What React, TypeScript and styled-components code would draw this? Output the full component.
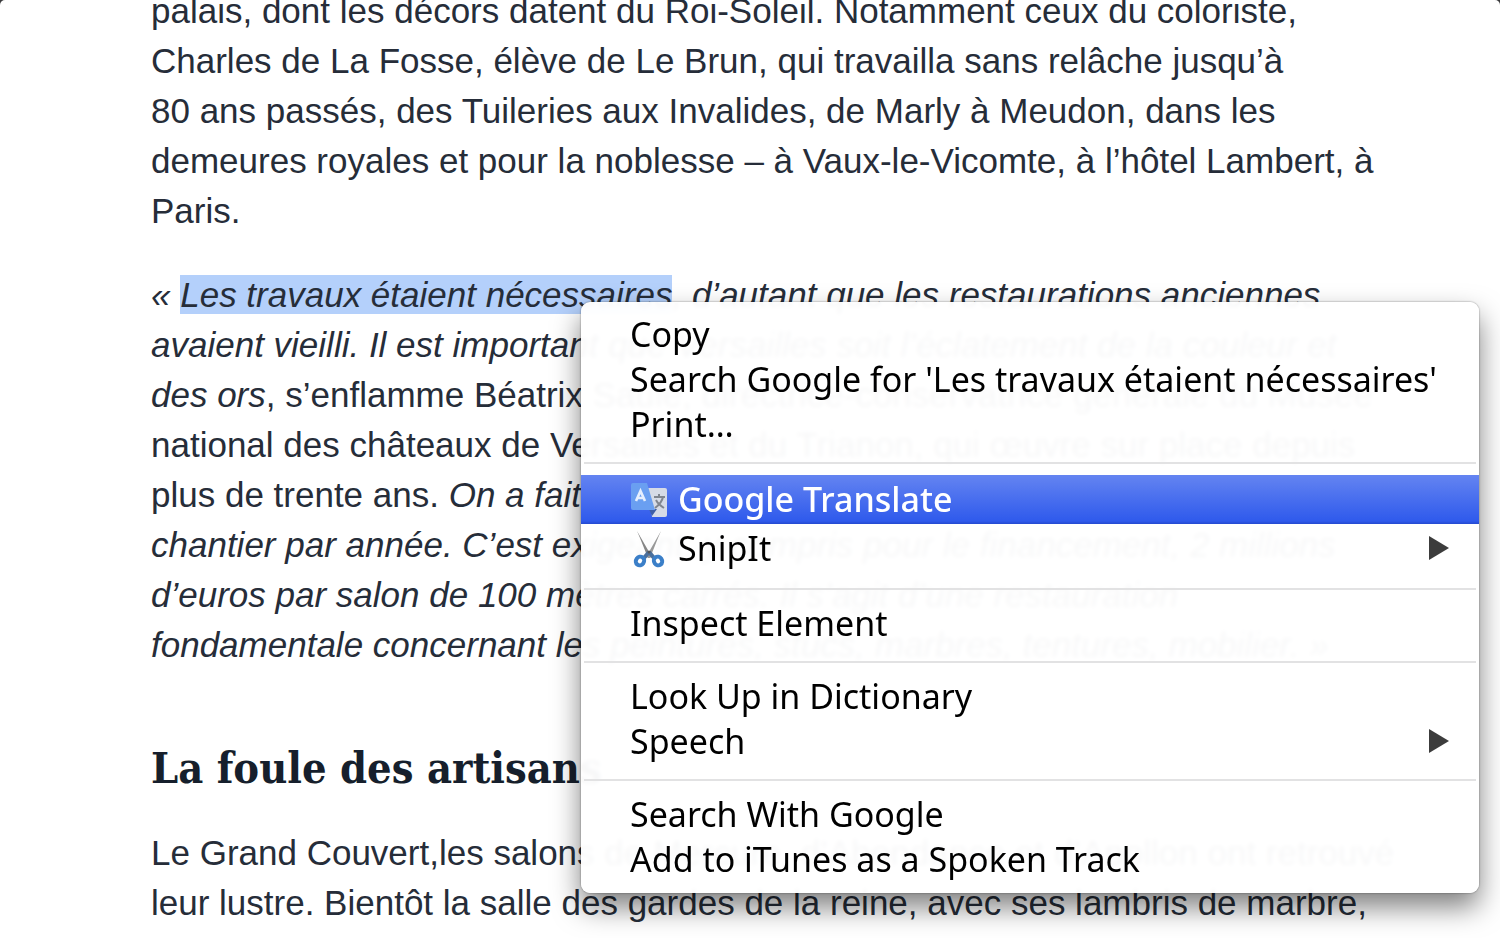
import React from 'react';
import styled, { createGlobalStyle, css } from 'styled-components';

const GlobalStyle = createGlobalStyle`
  *, *::before, *::after { box-sizing: border-box; }
  body { margin: 0; background: #3a3a3c; }
`;

const Page = styled.main`
  position: relative;
  height: 100vh;
  overflow: hidden;
  padding-left: 151px;
  background: #fff;
  border-radius: 5px 5px 0 0;
  color: #262d39;
  font-family: 'Liberation Sans', Arial, sans-serif;
  font-size: 35px;
  line-height: 50px;
  white-space: nowrap;
`;

const Article = styled.article`
  display: flex;
  flex-direction: column;
  margin-top: -14px;
`;

const Paragraph = styled.p`
  margin: 0 0 34px;
`;

const Heading = styled.h2`
  margin: 34px 0 30px;
  color: #161f2c;
  font: 700 43px/60px 'DejaVu Serif Condensed', 'DejaVu Serif', serif;
  font-stretch: condensed;
`;

const Selection = styled.mark`
  background: #b4d0fb;
  color: inherit;
`;

const Menu = styled.div`
  position: absolute;
  top: 302px;
  left: 581px;
  width: 898px;
  padding: 10px 0 11px;
  display: flex;
  flex-direction: column;
  border-radius: 9px;
  background: rgba(255, 255, 255, 0.965);
  backdrop-filter: blur(2px);
  box-shadow: 0 0 2px rgba(0, 0, 0, 0.5), 0 14px 28px rgba(0, 0, 0, 0.5);
`;

const Item = styled.button<{ $tall?: boolean; $active?: boolean }>`
  display: flex;
  align-items: center;
  height: ${(p) => (p.$tall ? 49 : 45)}px;
  padding: 0 30px 2px 49px;
  border: 0;
  background: none;
  color: #000;
  font-family: 'Noto Sans', sans-serif;
  font-size: 34px;
  line-height: 42px;
  text-align: left;
  ${(p) =>
    p.$active &&
    css`
      background: linear-gradient(#6484f1, #2f5aec 94%, #2449cf);
      color: #fff;
      font-weight: 500;
    `}
`;

const Label = styled.span`
  flex: 1;
`;

const Separator = styled.hr`
  width: calc(100% - 6px);
  height: 2px;
  margin: 15px 3px 11px;
  border: 0;
  background: #e2e2e3;
`;

const Icon = styled.svg`
  flex: none;
  width: 40px;
  height: 40px;
  margin-right: 8px;
`;

const Arrow = styled.svg`
  flex: none;
  width: 20px;
  height: 24px;
`;

const TranslateIcon = () => (
  <Icon viewBox="0 0 40 40" aria-hidden="true">
    <path d="M18 9h17a2 2 0 0 1 2 2v25a2 2 0 0 1-2 2H22z" fill="#d6dbe6" />
    <path d="M19 30h8l-5 7z" fill="#3f5fa6" />
    <path d="M3 4h14l8 27H3a2 2 0 0 1-2-2V6a2 2 0 0 1 2-2z" fill="#6a9ff1" />
    <path d="M6 22 10.500 12 15 22M7.500 19h6" fill="none" stroke="#e6effe" strokeWidth="2.600" />
    <path d="M24 18h11M29 15v3M33 18c-1 5-4 8-8 11M26 21c2 4 5 6 8 8" fill="none" stroke="#80868f" strokeWidth="2" />
  </Icon>
);

const ScissorsIcon = () => (
  <Icon viewBox="0 0 40 40" aria-hidden="true">
    <path d="M7 3 22 29l-4 1L10 10z" fill="#858585" />
    <path d="M31 3 16 29l4 1L28 10z" fill="#989898" />
    <path d="m14 30 5-6M24 30l-5-6" stroke="#4a6f9c" strokeWidth="4" />
    <ellipse cx="10" cy="33" rx="4" ry="4.500" transform="rotate(35 10 33)" fill="none" stroke="#3b7fc8" strokeWidth="4" />
    <ellipse cx="28" cy="33" rx="4" ry="4.500" transform="rotate(-35 28 33)" fill="none" stroke="#3b7fc8" strokeWidth="4" />
    <circle cx="19" cy="24" r="1.500" fill="#555" />
  </Icon>
);

const SubmenuArrow = () => (
  <Arrow viewBox="0 0 20 24" aria-hidden="true">
    <path d="M0 0 20 12 0 24z" fill="#3c3c3c" />
  </Arrow>
);

export default function App() {
  return (
    <>
      <GlobalStyle />
      <Page>
        <Article>
          <Paragraph>
            palais, dont les décors datent du Roi-Soleil. Notamment ceux du coloriste,
            <br />
            Charles de La Fosse, élève de Le Brun, qui travailla sans relâche jusqu’à
            <br />
            80 ans passés, des Tuileries aux Invalides, de Marly à Meudon, dans les
            <br />
            demeures royales et pour la noblesse – à Vaux-le-Vicomte, à l’hôtel Lambert, à
            <br />
            Paris.
          </Paragraph>
          <Paragraph>
            <em>
              « <Selection>Les travaux étaient nécessaires</Selection>, d’autant que les restaurations anciennes
              <br />
              avaient vieilli. Il est important que Versailles soit l’éclatement de la couleur et
              <br />
              des ors
            </em>
            , s’enflamme Béatrix Saule, directrice-conservatrice générale du Musée
            <br />
            national des châteaux de Versailles et du Trianon, qui œuvre sur place depuis
            <br />
            plus de trente ans. <em>On a fait le choix de restaurer un grand</em>
            <br />
            <em>
              chantier par année. C’est exigeant, y compris pour le financement, 2 millions
              <br />
              d’euros par salon de 100 mètres carrés. Il s’agit d’une restauration
              <br />
              fondamentale concernant les peintures, stucs, marbres, tentures, mobilier. »
            </em>
          </Paragraph>
          <Heading>La foule des artisans</Heading>
          <Paragraph>
            Le Grand Couvert,les salons de Mercure, d’Abondance et d’Apollon ont retrouvé
            <br />
            leur lustre. Bientôt la salle des gardes de la reine, avec ses lambris de marbre,
          </Paragraph>
        </Article>

        <Menu role="menu">
          <Item role="menuitem">Copy</Item>
          <Item role="menuitem">Search Google for 'Les travaux étaient nécessaires'</Item>
          <Item role="menuitem">Print…</Item>
          <Separator />
          <Item role="menuitem" $tall $active>
            <TranslateIcon />
            <Label>Google Translate</Label>
          </Item>
          <Item role="menuitem" $tall>
            <ScissorsIcon />
            <Label>SnipIt</Label>
            <SubmenuArrow />
          </Item>
          <Separator />
          <Item role="menuitem">Inspect Element</Item>
          <Separator />
          <Item role="menuitem">Look Up in Dictionary</Item>
          <Item role="menuitem">
            <Label>Speech</Label>
            <SubmenuArrow />
          </Item>
          <Separator />
          <Item role="menuitem">Search With Google</Item>
          <Item role="menuitem">Add to iTunes as a Spoken Track</Item>
        </Menu>
      </Page>
    </>
  );
}
